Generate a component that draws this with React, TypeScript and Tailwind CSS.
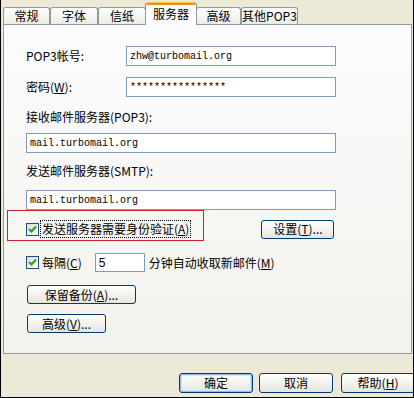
import React from 'react';

const font = { fontFamily: "'Noto Sans CJK SC', 'Liberation Sans', sans-serif" };

const tabs = [
  { label: '常规', w: 'w-[47px]' },
  { label: '字体', w: 'w-[48px]' },
  { label: '信纸', w: 'w-[48px]' },
  { label: '服务器', w: 'w-[52px]', active: true },
  { label: '高级', w: 'w-[45px]' },
  { label: '其他POP3', w: 'w-[57px]' },
];

function Tab({ label, w, active }: { label: string; w: string; active?: boolean }) {
  if (active) {
    return (
      <div className={`${w} relative z-10 -mx-px mt-[2px] h-[23px] rounded-t-[3px] border-x border-[#919b9c] bg-[#fcfcfe] flex flex-col`}>
        <div className="h-[3px] rounded-t-[3px] bg-[#e68b2c] border-t border-[#ffc83c]" />
        <div className="flex-1 flex items-center justify-center text-[12px] text-black pb-[2px]">{label}</div>
      </div>
    );
  }
  return (
    <div className={`${w} mt-[7px] h-[17px] rounded-t-[3px] border border-b-0 border-[#919b9c] bg-linear-to-b from-white to-[#ecebe5] flex items-center justify-center text-[12px] text-black`}>
      {label}
    </div>
  );
}

function Check() {
  return (
    <div className="w-[13px] h-[13px] shrink-0 border border-[#1c5180] bg-linear-to-br from-[#dcdcd7] to-white flex items-center justify-center">
      <svg width="9" height="9" viewBox="0 0 9 9">
        <path d="M1 4 L3.5 6.5 L8 1.5" fill="none" stroke="#21a121" strokeWidth="2" />
      </svg>
    </div>
  );
}

function Btn({ children, className = '', def }: { children: React.ReactNode; className?: string; def?: boolean }) {
  return (
    <div
      className={`${className} shrink-0 flex items-center justify-center rounded-[3px] border border-[#003c74] bg-linear-to-b from-white to-[#e6e5dd] text-[12px] leading-none text-black ${
        def ? 'shadow-[inset_0_0_0_1px_#98b8ea,inset_0_0_0_2px_#cee7ff]' : ''
      }`}
    >
      {children}
    </div>
  );
}

function Input({ children, className = '' }: { children?: React.ReactNode; className?: string }) {
  return (
    <div
      className={`${className} h-[20px] border border-[#7f9db9] bg-white flex items-center pl-[3px] text-[10px] text-black`}
      style={{ fontFamily: "'Liberation Mono', monospace" }}
    >
      {children}
    </div>
  );
}

const U = ({ c }: { c: string }) => <span className="underline underline-offset-1">{c}</span>;

export default function App() {
  return (
    <div style={font} className="w-[414px] h-[398px] overflow-hidden bg-[#ece9d8] border-l border-r border-b border-black flex flex-col">
      {/* tab strip */}
      <div className="h-[24px] flex pl-[2px] shrink-0">
        {tabs.map((t) => (
          <Tab key={t.label} {...t} />
        ))}
      </div>

      {/* panel */}
      <div className="relative ml-[2px] w-[409px] h-[330px] shrink-0 border border-[#919b9c] bg-linear-to-b from-[#fcfcfe] to-[#f3f2ec] pl-[22px] text-[12px] text-black">
        <div className="mt-[21px] flex items-center">
          <span className="w-[100px]">POP3帐号:</span>
          <Input className="w-[210px]">zhw@turbomail.org</Input>
        </div>
        <div className="mt-[11px] flex items-center">
          <span className="w-[100px]">密码(<U c="W" />):</span>
          <Input className="w-[210px]">****************</Input>
        </div>
        <div className="mt-[12px] h-[16px] leading-[16px]">接收邮件服务器(POP3):</div>
        <Input className="mt-[8px] w-[310px]">mail.turbomail.org</Input>
        <div className="mt-[10px] h-[16px] leading-[16px]">发送邮件服务器(SMTP):</div>
        <Input className="mt-[11px] w-[310px]">mail.turbomail.org</Input>

        <div className="mt-[10px] h-[18px] flex items-center">
          <Check />
          <span className="ml-[1px] h-[18px] leading-[16px] px-[1px] border border-dotted border-black">
            发送服务器需要身份验证(<U c="A" />)
          </span>
          <Btn className="ml-[70px] w-[73px] h-[19px]">
            设置(<U c="T" />)...
          </Btn>
        </div>

        <div className="mt-[15px] h-[19px] flex items-center">
          <Check />
          <span className="ml-[3px]">每隔(<U c="C" />)</span>
          <div className="ml-[13px] w-[50px] h-[19px] border border-[#7f9db9] bg-white flex items-center pl-[3px] text-[12px]" style={{ fontFamily: "'Liberation Sans', sans-serif" }}>
            5
          </div>
          <span className="ml-[4px]">分钟自动收取新邮件(<U c="M" />)</span>
        </div>

        <Btn className="mt-[13px] ml-px w-[109px] h-[19px]">
          保留备份(<U c="A" />)...
        </Btn>
        <Btn className="mt-[10px] ml-px w-[79px] h-[19px]">
          高级(<U c="V" />)...
        </Btn>

        {/* annotation box */}
        <div className="absolute left-[3px] top-[185px] w-[197px] h-[31px] border border-[#d4202a]" />
      </div>

      {/* dialog buttons */}
      <div className="mt-[19px] flex pl-[178px]">
        <Btn def className="w-[74px] h-[20px]">确定</Btn>
        <Btn className="ml-[6px] w-[74px] h-[20px]">取消</Btn>
        <Btn className="ml-[8px] w-[74px] h-[20px]">
          帮助(<U c="H" />)
        </Btn>
      </div>
    </div>
  );
}
